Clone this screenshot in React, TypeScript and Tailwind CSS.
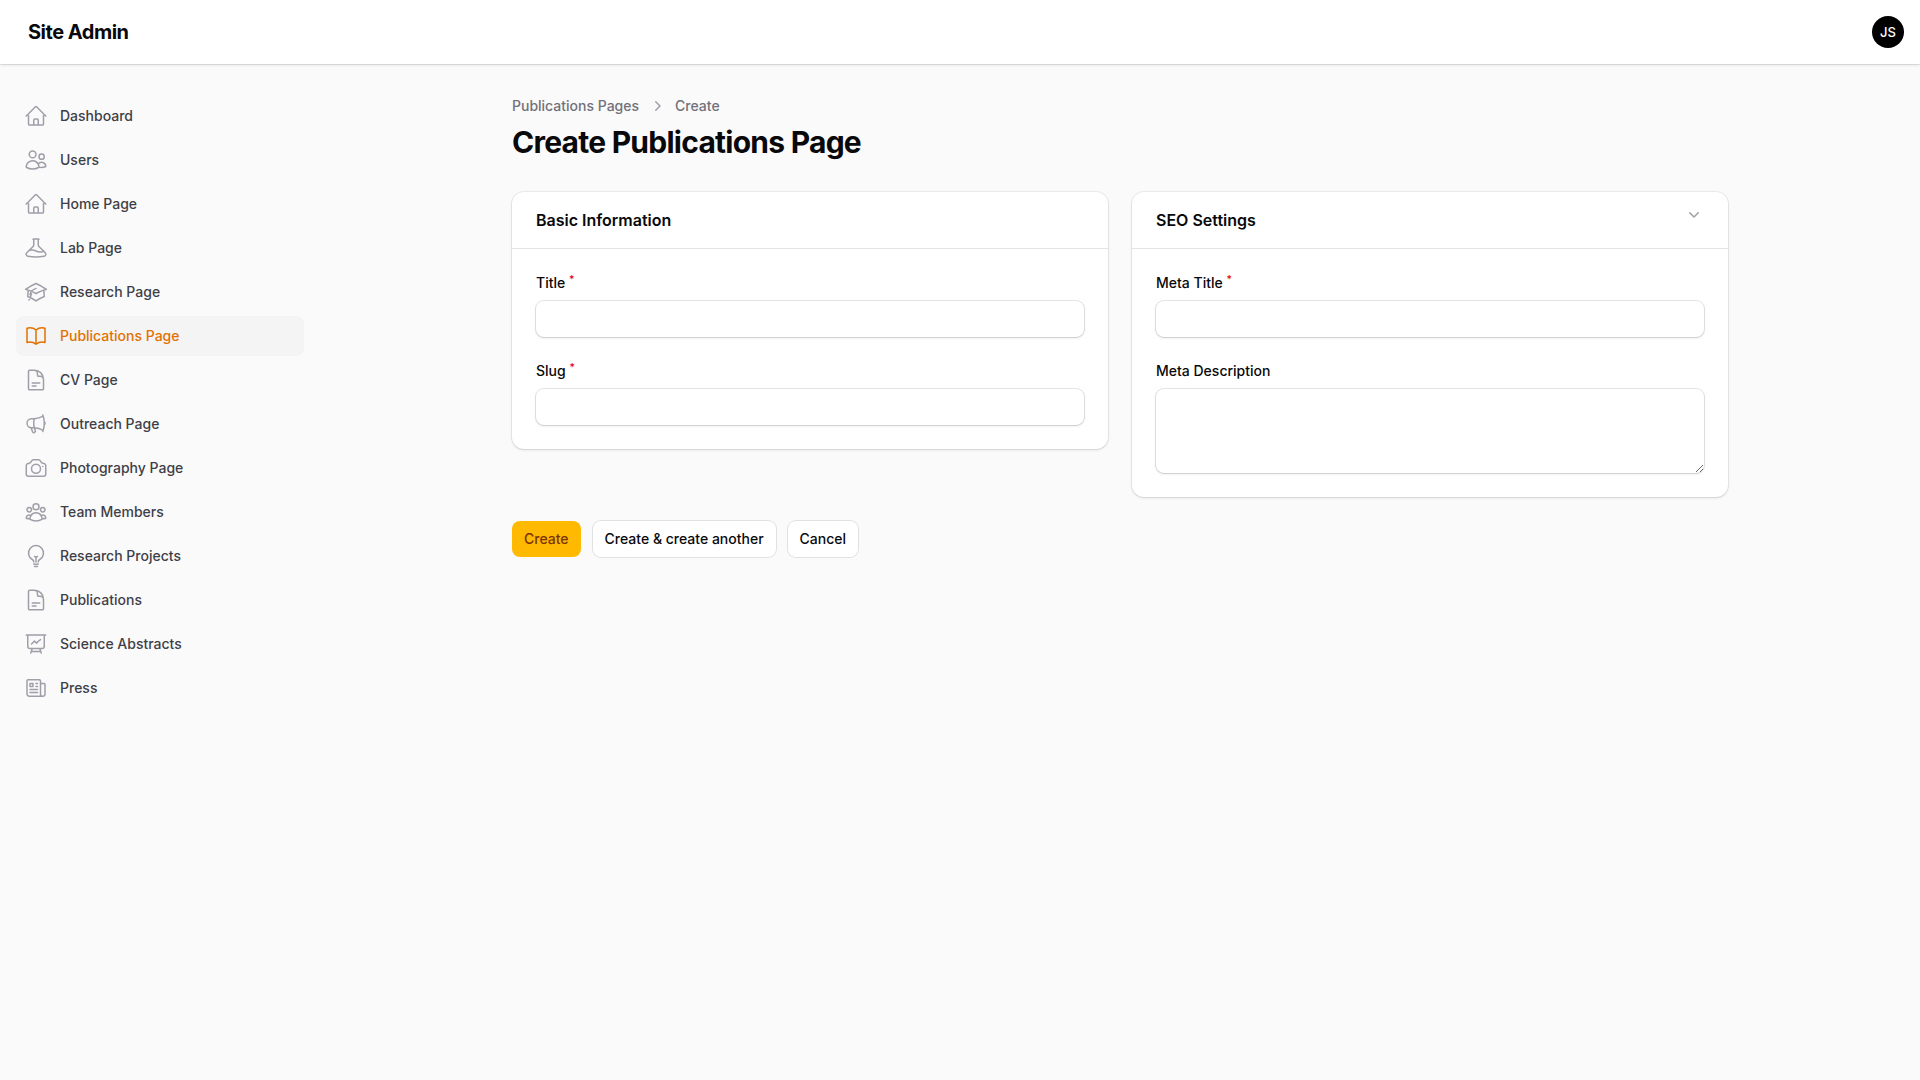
import type { ComponentType, ReactNode } from "react";
import {
  HiOutlineAcademicCap,
  HiOutlineBeaker,
  HiOutlineBookOpen,
  HiOutlineCamera,
  HiOutlineDocumentText,
  HiOutlineHome,
  HiOutlineLightBulb,
  HiOutlineMegaphone,
  HiOutlineNewspaper,
  HiOutlinePresentationChartLine,
  HiOutlineUserGroup,
  HiOutlineUsers,
} from "react-icons/hi2";

type NavEntry = {
  label: string;
  icon: ComponentType<{ className?: string }>;
  active?: boolean;
};

const navigation: NavEntry[] = [
  { label: "Dashboard", icon: HiOutlineHome },
  { label: "Users", icon: HiOutlineUsers },
  { label: "Home Page", icon: HiOutlineHome },
  { label: "Lab Page", icon: HiOutlineBeaker },
  { label: "Research Page", icon: HiOutlineAcademicCap },
  { label: "Publications Page", icon: HiOutlineBookOpen, active: true },
  { label: "CV Page", icon: HiOutlineDocumentText },
  { label: "Outreach Page", icon: HiOutlineMegaphone },
  { label: "Photography Page", icon: HiOutlineCamera },
  { label: "Team Members", icon: HiOutlineUserGroup },
  { label: "Research Projects", icon: HiOutlineLightBulb },
  { label: "Publications", icon: HiOutlineDocumentText },
  { label: "Science Abstracts", icon: HiOutlinePresentationChartLine },
  { label: "Press", icon: HiOutlineNewspaper },
];

function ChevronRightMini({ className }: { className?: string }) {
  return (
    <svg viewBox="0 0 20 20" fill="currentColor" aria-hidden="true" className={className}>
      <path
        fillRule="evenodd"
        clipRule="evenodd"
        d="M8.22 5.22a.75.75 0 0 1 1.06 0l4.25 4.25a.75.75 0 0 1 0 1.06l-4.25 4.25a.75.75 0 0 1-1.06-1.06L11.94 10 8.22 6.28a.75.75 0 0 1 0-1.06Z"
      />
    </svg>
  );
}

function ChevronDownMini({ className }: { className?: string }) {
  return (
    <svg viewBox="0 0 20 20" fill="currentColor" aria-hidden="true" className={className}>
      <path
        fillRule="evenodd"
        clipRule="evenodd"
        d="M5.22 8.22a.75.75 0 0 1 1.06 0L10 11.94l3.72-3.72a.75.75 0 1 1 1.06 1.06l-4.25 4.25a.75.75 0 0 1-1.06 0L5.22 9.28a.75.75 0 0 1 0-1.06Z"
      />
    </svg>
  );
}

function Topbar() {
  return (
    <header className="relative z-10 flex h-16 items-center justify-between bg-white px-4 shadow-sm ring-1 ring-zinc-950/5">
      <a href="#" className="ml-3 text-xl leading-5 font-bold tracking-tight text-zinc-950">
        Site Admin
      </a>
      <button
        type="button"
        aria-label="User menu"
        className="flex size-8 items-center justify-center rounded-full bg-black text-[13px] leading-none font-medium text-white"
      >
        JS
      </button>
    </header>
  );
}

function Sidebar() {
  return (
    <nav aria-label="Main" className="w-80 shrink-0 px-4 py-8">
      <ul className="flex flex-col gap-1">
        {navigation.map(({ label, icon: Icon, active }) => (
          <li key={label}>
            <a
              href="#"
              aria-current={active ? "page" : undefined}
              className={
                active
                  ? "flex items-center gap-3 rounded-lg bg-zinc-100 p-2 text-amber-600"
                  : "flex items-center gap-3 rounded-lg p-2 text-zinc-700"
              }
            >
              <Icon className={active ? "size-6 text-amber-600" : "size-6 text-zinc-400"} />
              <span className="text-sm font-medium">{label}</span>
            </a>
          </li>
        ))}
      </ul>
    </nav>
  );
}

function Section({ title, action, children }: { title: string; action?: ReactNode; children: ReactNode }) {
  return (
    <section className="rounded-xl bg-white shadow-sm ring-1 ring-zinc-950/5">
      <header className="flex items-start justify-between px-6 py-4">
        <h2 className="text-base leading-6 font-semibold text-zinc-950">{title}</h2>
        {action}
      </header>
      <div className="flex flex-col gap-6 border-t border-zinc-200 p-6">{children}</div>
    </section>
  );
}

function Field({ id, label, required, multiline }: { id: string; label: string; required?: boolean; multiline?: boolean }) {
  return (
    <div className="flex flex-col gap-2">
      <label htmlFor={id} className="text-sm leading-5 font-medium text-zinc-950">
        {label}
        {required && (
          <>
            {" "}
            <sup className="text-red-600">*</sup>
          </>
        )}
      </label>
      {multiline ? (
        <textarea
          id={id}
          rows={3}
          className="block w-full rounded-lg bg-white px-3 py-1.5 text-sm leading-6 text-zinc-950 shadow-sm ring-1 ring-zinc-950/10 outline-none"
        />
      ) : (
        <input
          id={id}
          type="text"
          required={required}
          className="h-9 w-full rounded-lg bg-white px-3 text-sm leading-6 text-zinc-950 shadow-sm ring-1 ring-zinc-950/10 outline-none"
        />
      )}
    </div>
  );
}

export default function App() {
  return (
    <div className="min-h-screen bg-zinc-50 font-['Inter',sans-serif] text-zinc-950 antialiased">
      <Topbar />
      <div className="flex">
        <Sidebar />
        <main className="mx-auto w-full max-w-7xl min-w-0 px-8 py-8">
          <nav aria-label="Breadcrumb">
            <ol className="flex items-center gap-2 text-sm font-medium text-zinc-500">
              <li>
                <a href="#">Publications Pages</a>
              </li>
              <li className="flex items-center gap-2">
                <ChevronRightMini className="size-5 text-zinc-400" />
                <a href="#">Create</a>
              </li>
            </ol>
          </nav>
          <h1 className="mt-2 text-3xl leading-9 font-bold tracking-tight">Create Publications Page</h1>

          <form className="mt-8" onSubmit={(event) => event.preventDefault()}>
            <div className="grid grid-cols-2 items-start gap-6">
              <Section title="Basic Information">
                <Field id="title" label="Title" required />
                <Field id="slug" label="Slug" required />
              </Section>
              <Section
                title="SEO Settings"
                action={
                  <button
                    type="button"
                    aria-label="Collapse SEO Settings"
                    className="-mx-2 -my-3 flex size-9 items-center justify-center rounded-lg text-zinc-400"
                  >
                    <ChevronDownMini className="size-5" />
                  </button>
                }
              >
                <Field id="meta-title" label="Meta Title" required />
                <Field id="meta-description" label="Meta Description" multiline />
              </Section>
            </div>
            <div className="mt-6 flex gap-3 text-sm leading-5 font-medium">
              <button type="submit" className="rounded-lg bg-amber-400 px-3 py-2 text-amber-900">
                Create
              </button>
              <button type="button" className="rounded-lg bg-white px-3 py-2 ring-1 ring-zinc-950/10">
                Create &amp; create another
              </button>
              <button type="button" className="rounded-lg bg-white px-3 py-2 ring-1 ring-zinc-950/10">
                Cancel
              </button>
            </div>
          </form>
        </main>
      </div>
    </div>
  );
}
